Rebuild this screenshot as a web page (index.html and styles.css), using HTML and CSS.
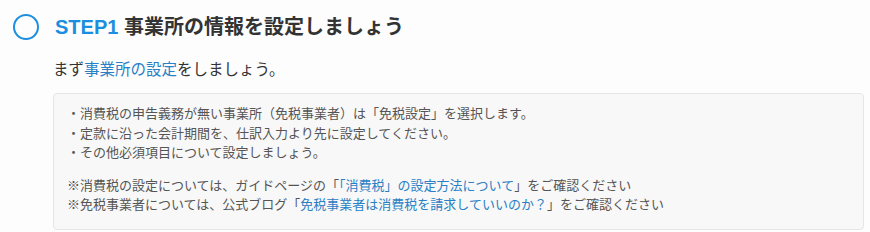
FILE: index.html
```html
<!DOCTYPE html>
<html lang="ja">
  <head>
    <meta charset="utf-8">
    <title>STEP1 事業所の情報を設定しましょう</title>
    <link rel="stylesheet" href="styles.css">
  </head>
  <body>
    <div class="step">
      <div class="stepHeader">
        <span class="stepCircle"></span>
        <h2 class="stepTitle"><span class="stepNo">STEP1</span> 事業所の情報を設定しましょう</h2>
      </div>
      <div class="stepBody">
        <p class="lead">まず<a href="#" class="link">事業所の設定</a>をしましょう。</p>
        <div class="noteBox">
          <p class="notes">
            ・消費税の申告義務が無い事業所（免税事業者）は「免税設定」を選択します。<br>
            ・定款に沿った会計期間を、仕訳入力より先に設定してください。<br>
            ・その他必須項目について設定しましょう。
          </p>
          <p class="notes">
            ※消費税の設定については、ガイドページの「<a href="#" class="link">「消費税」の設定方法について</a>」をご確認ください<br>
            ※免税事業者については、公式ブログ「<a href="#" class="link">免税事業者は消費税を請求していいのか？</a>」をご確認ください
          </p>
        </div>
      </div>
    </div>
  </body>
</html>
```

FILE: styles.css
```css
html {
  background-color: #fdfdfd;
}
body {
  margin: 0;
  color: #333;
  font-family: "Liberation Sans", "Noto Sans CJK JP", sans-serif;
}
.step {
  padding: 13px 6px 0 13px;
}
.stepHeader {
  display: flex;
  align-items: center;
}
.stepCircle {
  box-sizing: border-box;
  width: 26px;
  height: 26px;
  border: 2.5px solid #1e8fdf;
  border-radius: 50%;
  margin-right: 16px;
}
.stepTitle {
  margin: 0;
  font-size: 20px;
  line-height: 28px;
  font-weight: bold;
  color: #333;
}
.stepNo {
  color: #1a8ee0;
}
.stepBody {
  padding-left: 40px;
}
.lead {
  margin: 18px 0 12px 0;
  font-size: 15.5px;
  line-height: 22px;
  color: #333;
}
.link {
  color: #2a80c4;
  text-decoration: none;
}
.noteBox {
  background-color: #f8f8f8;
  border: 1px solid #e6e6e6;
  border-radius: 4px;
  padding: 10px 15px 14px 13px;
}
.notes {
  margin: 0;
  font-size: 13px;
  line-height: 19.5px;
  color: #555;
}
.notes + .notes {
  margin-top: 13px;
}
```
